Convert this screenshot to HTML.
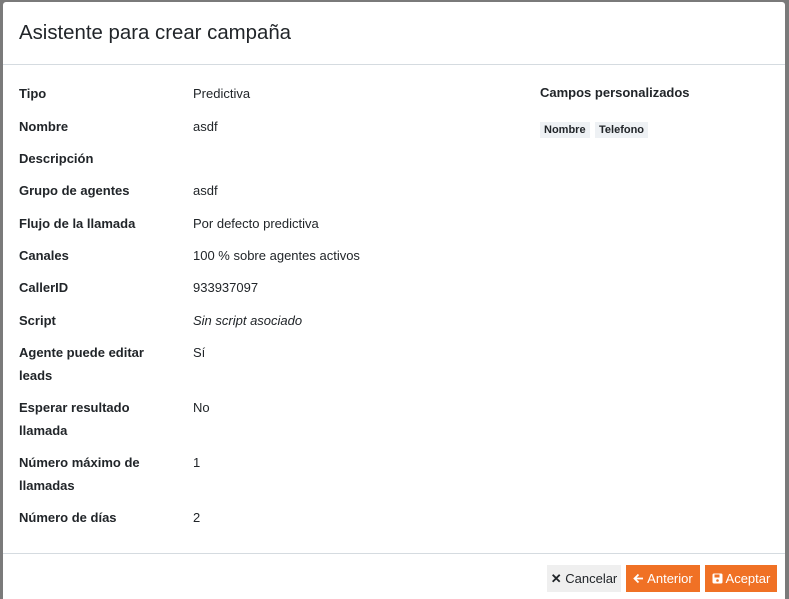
<!DOCTYPE html>
<html><head><meta charset="utf-8"><style>
html,body{margin:0;width:789px;height:599px;overflow:hidden}
body{background:#7a7a7a;font-family:"Liberation Sans",sans-serif;color:#212529;position:relative}
.modal{position:absolute;left:3px;top:2px;width:782px;height:597px;background:#fff;border-radius:3px 3px 0 0}
.hdr{height:62px;border-bottom:1px solid #d5dbe0;position:relative}
.hdr h1{margin:0;position:absolute;left:16px;top:20px;font-size:20.4px;font-weight:normal}
.row{position:absolute;left:16px;font-size:13px;line-height:23px}
.row b{position:absolute;left:0;width:160px;white-space:nowrap}
.row span{position:absolute;left:174px;white-space:nowrap}
.cp{position:absolute;left:537px;top:83px;font-size:13px;font-weight:bold}
.tag{position:absolute;top:120px;background:#eef1f4;font-size:11px;font-weight:bold;padding:0 4px;line-height:16px}
.ftr{position:absolute;left:0;top:551px;width:782px;border-top:1px solid #d5dbe0}
.btn{position:absolute;top:563px;height:27px;line-height:27px;font-size:13px;color:#fff;background:#f07125;text-align:center}
</style></head><body>
<div class="modal">
<div class="hdr"><h1>Asistente para crear campaña</h1></div>
<div class="row" style="top:80px"><b>Tipo</b><span>Predictiva</span></div>
<div class="row" style="top:113px"><b>Nombre</b><span>asdf</span></div>
<div class="row" style="top:145px"><b>Descripción</b></div>
<div class="row" style="top:177px"><b>Grupo de agentes</b><span>asdf</span></div>
<div class="row" style="top:210px"><b>Flujo de la llamada</b><span>Por defecto predictiva</span></div>
<div class="row" style="top:242px"><b>Canales</b><span>100 % sobre agentes activos</span></div>
<div class="row" style="top:274px"><b>CallerID</b><span>933937097</span></div>
<div class="row" style="top:307px"><b>Script</b><span><i>Sin script asociado</i></span></div>
<div class="row" style="top:339px"><b>Agente puede editar<br>leads</b><span>Sí</span></div>
<div class="row" style="top:394px"><b>Esperar resultado<br>llamada</b><span>No</span></div>
<div class="row" style="top:449px"><b>Número máximo de<br>llamadas</b><span>1</span></div>
<div class="row" style="top:504px"><b>Número de días</b><span>2</span></div>
<div class="cp">Campos personalizados</div>
<div class="tag" style="left:537px">Nombre</div>
<div class="tag" style="left:592px">Telefono</div>
<div class="ftr"></div>
<div class="btn" style="left:544px;width:74px;background:#efefef;color:#212529"><b>✕</b> Cancelar</div>
<div class="btn" style="left:623px;width:74px"><svg width="11" height="11" viewBox="0 0 11 11" style="vertical-align:-1px"><path d="M10 5.5H2M5.5 1.5L1.5 5.5 5.5 9.5" stroke="#fff" stroke-width="1.8" fill="none"/></svg> Anterior</div>
<div class="btn" style="left:702px;width:72px"><svg width="11" height="11" viewBox="0 0 11 11" style="vertical-align:-1px"><rect x="0.5" y="0.5" width="10" height="10" rx="1.5" fill="#fff"/><rect x="2.5" y="1.5" width="5" height="3" fill="#f07125"/><circle cx="5.5" cy="7.5" r="1.3" fill="#f07125"/></svg> Aceptar</div>
</div>
</body></html>
